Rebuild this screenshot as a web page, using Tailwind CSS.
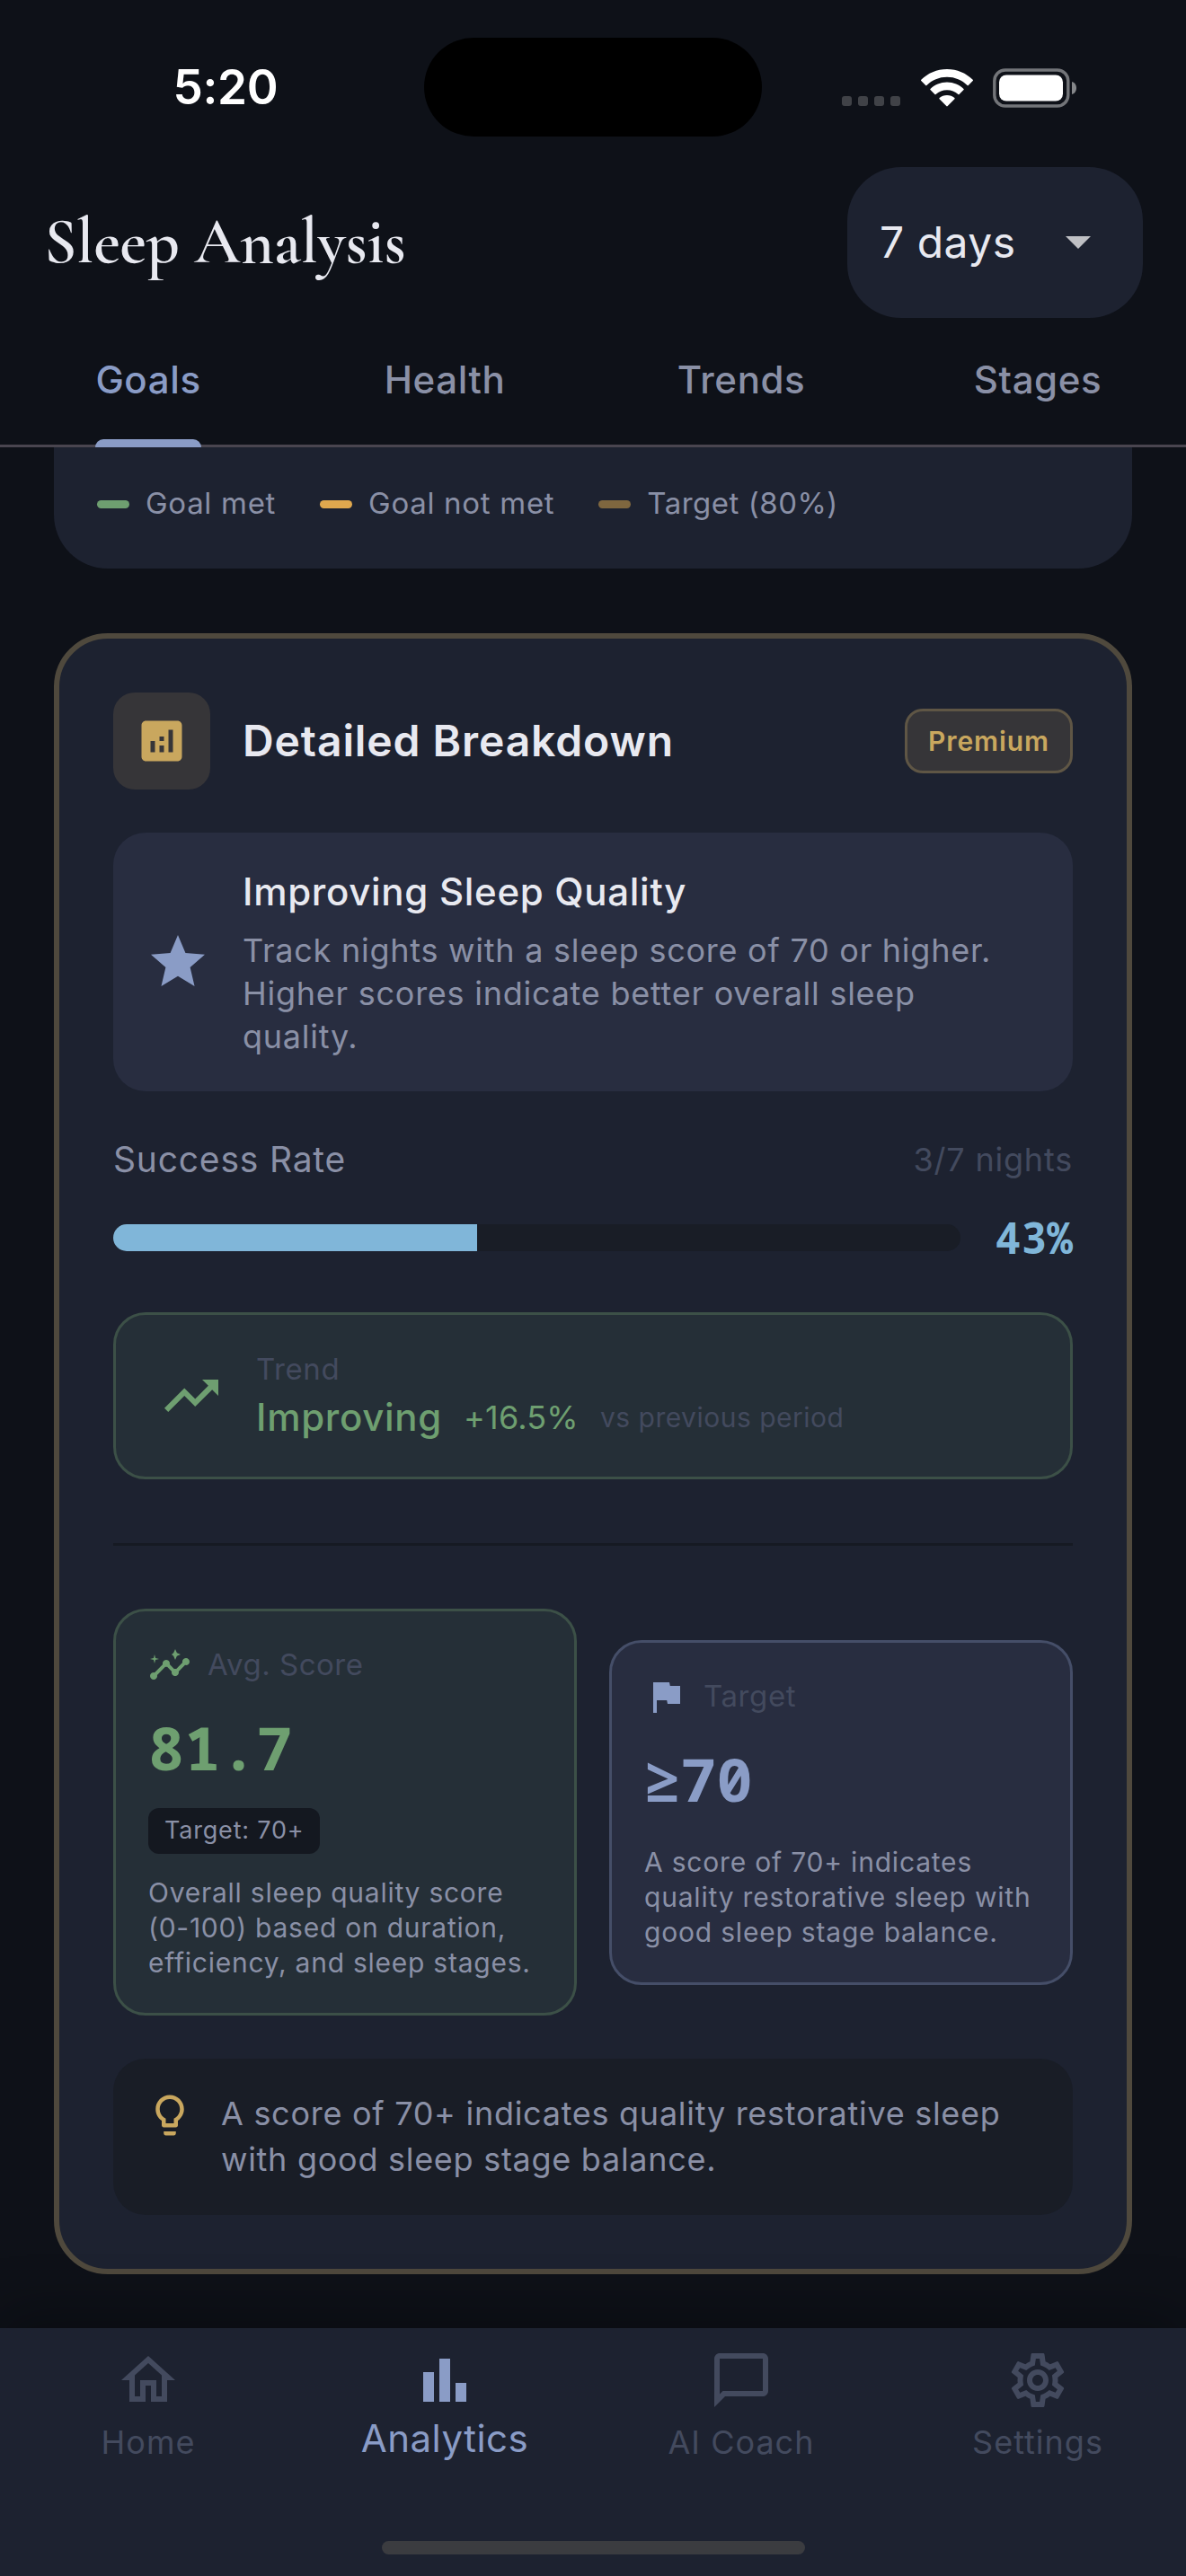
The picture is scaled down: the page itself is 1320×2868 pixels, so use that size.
<!DOCTYPE html>
<html lang="en">
<head>
  <meta charset="UTF-8" />
  <meta name="viewport" content="width=device-width, initial-scale=1.0" />
  <title>Sleep Analysis</title>
  <script src="https://cdn.jsdelivr.net/npm/@tailwindcss/browser@4"></script>
</head>
<body class="w-[1320px] h-[2868px] overflow-hidden bg-[#0e1118] font-['Inter','Liberation_Sans',sans-serif] text-[#e8e9f0]">

  <!-- Status bar -->
  <div class="grid grid-cols-[472px_376px_472px] h-[186px] pt-[42px] pb-[34px]">
    <div class="pl-[30px] text-center text-[53px] leading-[111px] tracking-[-0.3px] font-semibold text-white">5:20</div>
    <div class="h-[110px] rounded-full bg-black"></div>
    <div class="flex items-center pl-[89px]">
      <div class="flex gap-[7px] mt-[29px]">
        <div class="size-[11px] rounded-[3px] bg-[#404247]"></div>
        <div class="size-[11px] rounded-[3px] bg-[#404247]"></div>
        <div class="size-[11px] rounded-[3px] bg-[#404247]"></div>
        <div class="size-[11px] rounded-[3px] bg-[#404247]"></div>
      </div>
      <svg class="ml-[23px] w-[58px] h-[42px]" viewBox="0 0 58 42" fill="#fff">
        <path d="M29 0C17.800 0 7.600 4.500 0.300 11.800Q-0.300 12.500 0.300 13.100L5.200 18Q5.800 18.500 6.400 18C12.200 12.200 20.200 8.800 29 8.800S45.800 12.200 51.600 18Q52.200 18.500 52.800 18L57.700 13.100Q58.300 12.500 57.700 11.800C50.400 4.500 40.200 0 29 0z" />
        <path d="M29 14.500C21.800 14.500 15.300 17.300 10.500 21.900Q9.900 22.500 10.500 23.100L15.400 28Q16 28.500 16.600 28C19.900 25 24.200 23.200 29 23.200S38.100 25 41.400 28Q42 28.500 42.600 28L47.500 23.100Q48.100 22.500 47.500 21.900C42.700 17.300 36.200 14.500 29 14.500z" />
        <path d="M29 29C25.700 29 22.800 30.200 20.600 32.100Q20 32.700 20.600 33.300L28.300 41.100Q29 41.700 29.700 41.100L37.400 33.300Q38 32.700 37.400 32.100C35.200 30.200 32.300 29 29 29z" />
      </svg>
      <svg class="ml-[22px] w-[94px] h-[44px]" viewBox="0 0 94 44">
        <rect x="1.800" y="2" width="82" height="40" rx="12" fill="none" stroke="#737579" stroke-width="3.400" />
        <rect x="7" y="7.500" width="71" height="29" rx="8" fill="#fff" />
        <path d="M88 15c3.500 1 5 4 5 7s-1.500 6-5 7z" fill="#85878a" />
      </svg>
    </div>
  </div>

  <!-- Header -->
  <header class="flex items-center justify-between h-[168px] pl-[49px] pr-12">
    <h1 class="pb-[2px] font-['Cormorant_Garamond','Liberation_Serif',serif] text-[72px] leading-[88px] tracking-[-0.2px] font-semibold">Sleep Analysis</h1>
    <div class="flex items-center justify-between w-[329px] h-[168px] rounded-[60px] bg-[#1d2230] pl-9 pr-[58px]">
      <span class="text-[48px] tracking-[0.5px]">7 days</span>
      <svg class="w-[28px] h-[14px]" viewBox="0 0 28 14" fill="#bfc0c4"><path d="M0 0h28L14 14z" /></svg>
    </div>
  </header>

  <!-- Tabs -->
  <nav class="h-[144px] border-b-[3px] border-[#49454f] text-[42px] font-medium tracking-[0.6px] text-[#8a90a6]">
    <div class="grid grid-cols-4 justify-items-center h-[144px]">
      <div class="flex flex-col text-[#8a9cc6]">
        <span class="h-[135px] leading-[137px]">Goals</span>
        <span class="h-[9px] rounded-t-[9px] bg-[#8a9cc6]"></span>
      </div>
      <div class="leading-[137px]">Health</div>
      <div class="leading-[137px]">Trends</div>
      <div class="leading-[137px]">Stages</div>
    </div>
  </nav>

  <main class="px-[60px] pb-[60px]">
    <!-- Chart legend, end of the goals card -->
    <section class="flex items-center gap-[49px] h-[135px] pl-12 pb-[9px] rounded-b-[60px] bg-[#1d2230] text-[33px] tracking-[0.7px] text-[#8a90a6]">
      <div class="flex items-center gap-[18px]"><span class="w-9 h-[9px] rounded-full bg-[#6e9f70]"></span>Goal met</div>
      <div class="flex items-center gap-[18px]"><span class="w-9 h-[9px] rounded-full bg-[#e0a84e]"></span>Goal not met</div>
      <div class="flex items-center gap-[18px] tracking-[0.5px]"><span class="w-9 h-[9px] rounded-full bg-[#7f673f]"></span>Target (80%)</div>
    </section>

    <!-- Detailed breakdown -->
    <section class="mt-[72px] p-[60px] rounded-[60px] border-[6px] border-[#4f493d] bg-[#1d2230]">
      <div class="flex items-center">
        <div class="flex items-center justify-center size-[108px] rounded-[24px] bg-[#363538]">
          <svg class="size-[60px]" viewBox="0 0 24 24" fill="#c9a75e"><path d="M19 3H5c-1.100 0-2 .9-2 2v14c0 1.100.9 2 2 2h14c1.100 0 2-.9 2-2V5c0-1.100-.9-2-2-2zM9 17H7v-5h2v5zm4 0h-2v-3h2v3zm0-5h-2v-2h2v2zm4 5h-2V7h2v10z" /></svg>
        </div>
        <h2 class="ml-9 text-[48px] font-semibold tracking-[0.9px]">Detailed Breakdown</h2>
        <div class="flex items-center justify-center ml-auto w-[187px] h-[72px] rounded-[20px] border-[3px] border-[#5f5645] bg-[#363538] text-[30px] font-semibold tracking-[0.9px] text-[#c9a75e]">Premium</div>
      </div>

      <div class="flex items-center mt-12 h-[288px] px-9 rounded-[36px] bg-[#282d40]">
        <svg class="shrink-0 size-[72px]" viewBox="0 0 24 24" fill="#8a9cc6"><path d="M12 17.270L18.180 21l-1.640-7.030L22 9.240l-7.190-.61L12 2 9.190 8.630 2 9.240l5.460 4.730L5.820 21z" /></svg>
        <div class="ml-9">
          <h3 class="text-[42px] leading-[60px] font-medium tracking-[0.7px]">Improving Sleep Quality</h3>
          <p class="mt-[11px] mb-px text-[36px] leading-[48px] tracking-[0.75px] text-[#8a90a6]">Track nights with a sleep score of 70 or higher.<br>Higher scores indicate better overall sleep<br>quality.</p>
        </div>
      </div>

      <div class="flex items-center justify-between mt-12 h-[56px] text-[#8a90a6]">
        <span class="text-[39px] tracking-[0.8px]">Success Rate</span>
        <span class="text-[36px] tracking-[0.8px] text-[#434a5e]">3/7 nights</span>
      </div>
      <div class="flex items-center justify-between mt-[27px] h-[64px]">
        <div class="w-[943px] h-[30px] rounded-[15px] overflow-hidden bg-[#191d26]">
          <div class="h-full bg-[#80b6d9]" style="width: 42.9%"></div>
        </div>
        <span class="font-['Noto_Sans_Mono','DejaVu_Sans_Mono',monospace] text-[48px] leading-[64px] font-bold text-[#80b6d9]">43%</span>
      </div>

      <div class="flex items-center mt-[51px] h-[186px] pl-12 rounded-[36px] border-[3px] border-[#3c5047] bg-[#252f37]">
        <svg class="size-[72px]" viewBox="0 0 24 24" fill="#6e9f70"><path d="M16 6l2.290 2.290-4.880 4.880-4-4L2 16.590 3.410 18l6-6 4 4 6.300-6.290L22 12V6z" /></svg>
        <div class="ml-9">
          <div class="text-[33px] leading-[40px] tracking-[0.6px] text-[#434a5e]">Trend</div>
          <div class="flex mt-2 leading-[52px]">
            <span class="text-[42px] font-medium tracking-[0.7px] text-[#6e9f70]">Improving</span>
            <span class="ml-6 text-[36px] tracking-[0.2px] text-[#6e9f70]">+16.5%</span>
            <span class="ml-6 text-[30px] tracking-[0.5px] text-[#434a5e]">vs previous period</span>
          </div>
        </div>
      </div>

      <div class="mt-[71px] mb-[70px] h-[3px] bg-[#161a23]"></div>

      <div class="grid grid-cols-2 items-center gap-9">
        <div class="h-[453px] p-9 rounded-[36px] border-[3px] border-[#3c5047] bg-[#252f37]">
          <div class="flex items-center gap-[18px] h-12">
            <svg class="size-12" viewBox="0 0 24 24" fill="#6e9f70">
              <path d="M21 8c-1.450 0-2.260 1.440-1.930 2.510l-3.550 3.560c-.3-.09-.74-.09-1.040 0l-2.550-2.550C12.270 10.450 11.460 9 10 9c-1.450 0-2.270 1.440-1.930 2.520l-4.560 4.550C2.440 15.740 1 16.550 1 18c0 1.100.9 2 2 2 1.450 0 2.260-1.440 1.930-2.510l4.550-4.560c.3.09.74.09 1.040 0l2.550 2.550C12.730 16.550 13.540 18 15 18c1.450 0 2.270-1.440 1.930-2.520l3.560-3.550C21.560 12.260 23 11.450 23 10c0-1.100-.9-2-2-2z" />
              <path d="M15 9l.94-2.070L18 6l-2.060-.93L15 3l-.92 2.070L13 6l1.080.93zM3.500 11L4 9l2-.5L4 8l-.5-2L3 8l-2 .5L3 9z" />
            </svg>
            <span class="text-[33px] tracking-[0.5px] text-[#434a5e]">Avg. Score</span>
          </div>
          <div class="mt-6 font-['Noto_Sans_Mono','DejaVu_Sans_Mono',monospace] text-[67px] leading-[87px] font-bold text-[#6e9f70]">81.7</div>
          <div class="flex items-center w-fit mt-6 h-[51px] px-[18px] rounded-[12px] bg-[#141820] text-[27px] tracking-[0.8px] text-[#8a90a6]">Target: 70+</div>
          <p class="mt-6 text-[30px] leading-[39px] tracking-[0.75px] text-[#8a90a6]">Overall sleep quality score<br>(0-100) based on duration,<br>efficiency, and sleep stages.</p>
        </div>
        <div class="h-[384px] p-9 rounded-[36px] border-[3px] border-[#454e68] bg-[#282d40]">
          <div class="flex items-center gap-[18px] h-12">
            <svg class="size-12" viewBox="0 0 24 24" fill="#8a9cc6"><path d="M14.400 6L14 4H5v17h2v-7h5.600l.4 2h7V6z" /></svg>
            <span class="text-[33px] tracking-[0.6px] text-[#434a5e]">Target</span>
          </div>
          <div class="mt-6 font-['Noto_Sans_Mono','DejaVu_Sans_Mono',monospace] text-[67px] leading-[87px] font-bold text-[#8a9cc6]">≥70</div>
          <p class="mt-[30px] text-[30px] leading-[39px] tracking-[0.8px] text-[#8a90a6]">A score of 70+ indicates<br>quality restorative sleep with<br>good sleep stage balance.</p>
        </div>
      </div>

      <div class="flex gap-[30px] mt-12 h-[174px] p-9 rounded-[36px] bg-[#191d26]">
        <svg class="shrink-0 size-[54px]" viewBox="0 0 24 24" fill="#c9a75e"><path d="M9 21c0 .5.4 1 1 1h4c.6 0 1-.5 1-1v-1H9v1zm3-19C8.100 2 5 5.100 5 9c0 2.400 1.200 4.500 3 5.700V17c0 .5.4 1 1 1h6c.6 0 1-.5 1-1v-2.300c1.800-1.300 3-3.400 3-5.700 0-3.900-3.100-7-7-7zm2.900 11.100l-.9.6V16h-4v-2.300l-.9-.6C7.800 12.200 7 10.600 7 9c0-2.800 2.200-5 5-5s5 2.200 5 5c0 1.600-.8 3.200-2.100 4.100z" /></svg>
        <p class="text-[36px] leading-[51px] tracking-[0.72px] text-[#8a90a6]">A score of 70+ indicates quality restorative sleep<br>with good sleep stage balance.</p>
      </div>
    </section>
  </main>

  <!-- Bottom navigation -->
  <footer class="relative flex flex-col items-center h-[276px] pt-[22px] bg-[#1d2230] shadow-[0_-15px_60px_rgba(0,0,0,0.3)]">
    <div class="grid grid-cols-4 w-full h-[132px] text-center text-[36px] leading-[40px] tracking-[1px] text-[#434a5e]">
      <div class="flex flex-col items-center">
        <svg class="size-[72px]" viewBox="0 0 24 24" fill="currentColor"><path d="M12 5.690l5 4.500V18h-2v-6H9v6H7v-7.810l5-4.500M12 3L2 12h3v8h6v-6h2v6h6v-8h3L12 3z" /></svg>
        <span class="mt-[13px]">Home</span>
      </div>
      <div class="flex flex-col items-center text-[#8a9cc6]">
        <svg class="size-[72px]" viewBox="0 0 24 24" fill="currentColor"><path d="M4 9h4v11H4zm12 4h4v7h-4zm-6-9h4v16h-4z" /></svg>
        <span class="mt-[9px] text-[42px] tracking-[0.5px]">Analytics</span>
      </div>
      <div class="flex flex-col items-center">
        <svg class="size-[72px]" viewBox="0 0 24 24" fill="currentColor"><path d="M4 4h16v12H5.170L4 17.170V4m0-2c-1.100 0-1.990.9-1.990 2L2 22l4-4h14c1.100 0 2-.9 2-2V4c0-1.100-.9-2-2-2H4z" /></svg>
        <span class="mt-[13px]">AI Coach</span>
      </div>
      <div class="flex flex-col items-center">
        <svg class="size-[72px]" viewBox="0 0 24 24" fill="currentColor"><path d="M19.430 12.980c.04-.32.07-.64.07-.98s-.03-.66-.07-.98l2.110-1.650c.19-.15.24-.42.12-.64l-2-3.460c-.09-.16-.26-.25-.44-.25-.06 0-.12.01-.17.03l-2.490 1c-.52-.4-1.080-.73-1.690-.98l-.38-2.650C14.460 2.180 14.250 2 14 2h-4c-.25 0-.46.18-.49.42l-.38 2.650c-.61.25-1.170.59-1.690.98l-2.490-1c-.06-.02-.12-.03-.18-.03-.17 0-.34.09-.43.25l-2 3.460c-.13.22-.07.49.12.64l2.110 1.650c-.04.32-.07.65-.07.98s.03.66.07.98l-2.110 1.650c-.19.15-.24.42-.12.64l2 3.460c.09.16.26.25.44.25.06 0 .12-.01.17-.03l2.490-1c.52.4 1.080.73 1.690.98l.38 2.650c.03.24.24.42.49.42h4c.25 0 .46-.18.49-.42l.38-2.650c.61-.25 1.170-.59 1.690-.98l2.490 1c.06.02.12.03.18.03.17 0 .34-.09.43-.25l2-3.460c.12-.22.07-.49-.12-.64l-2.110-1.650zm-1.980-1.710c.04.31.05.52.05.73s-.02.43-.05.73l-.14 1.130.89.7 1.080.84-.7 1.210-1.270-.51-1.040-.42-.9.68c-.43.32-.84.56-1.250.73l-1.060.43-.16 1.130-.2 1.350h-1.400l-.19-1.350-.16-1.130-1.060-.43c-.43-.18-.83-.41-1.230-.71l-.91-.7-1.060.43-1.270.51-.7-1.210 1.080-.84.89-.7-.14-1.130c-.03-.31-.05-.54-.05-.74s.02-.43.05-.73l.14-1.130-.89-.7-1.080-.84.7-1.210 1.270.51 1.040.42.9-.68c.43-.32.84-.56 1.250-.73l1.060-.43.16-1.130.2-1.350h1.390l.19 1.350.16 1.130 1.060.43c.43.18.83.41 1.230.71l.91.7 1.060-.43 1.270-.51.7 1.210-1.070.85-.89.7.14 1.130zM12 8c-2.210 0-4 1.790-4 4s1.790 4 4 4 4-1.790 4-4-1.790-4-4-4zm0 6c-1.100 0-2-.9-2-2s.9-2 2-2 2 .9 2 2-.9 2-2 2z" /></svg>
        <span class="mt-[13px]">Settings</span>
      </div>
    </div>
    <div class="mt-[83px] w-[471px] h-[15px] rounded-full bg-[#3b3c40]"></div>
  </footer>
</body>
</html>
